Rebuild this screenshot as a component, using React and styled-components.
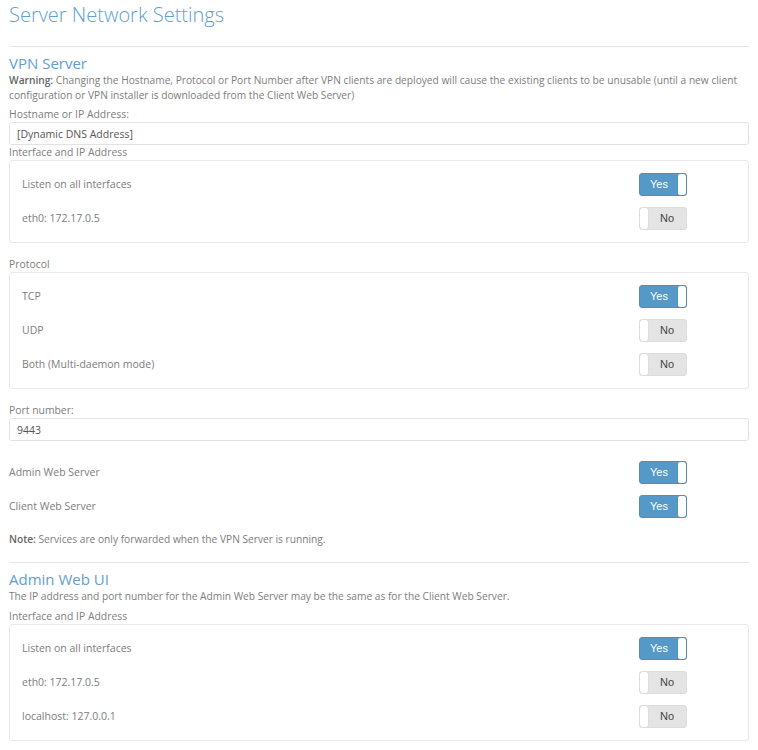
import React, { useState } from "react"
import styled, { createGlobalStyle } from "styled-components"

const GlobalStyle = createGlobalStyle`
  body {
    margin: 0;
    background: #fff;
    font-family: "Open Sans", "Liberation Sans", sans-serif;
    color: #7a7a7a;
  }
`

const Page = styled.div`
  padding: 0 9px;
  width: 740px;
`

const Title = styled.h1`
  margin: 0;
  padding-top: 3px;
  font-size: 20px;
  line-height: 24px;
  font-weight: 300;
  color: #5fa0d2;
`

const Rule = styled.hr`
  border: 0;
  border-top: 1px solid #e6e6e6;
  margin: ${p => p.$top}px 0 0;
`

const Heading = styled.h2`
  margin: 7px 0 0;
  font-size: 15px;
  line-height: 18px;
  font-weight: 400;
  color: #5fa0d2;
`

const Para = styled.p`
  margin: ${p => p.$top || 0}px 0 0;
  font-size: 10.2px;
  line-height: 15px;
  color: #7d7d7d;

  b {
    font-weight: 600;
    color: #666;
  }
`

const Label = styled.div`
  margin-top: ${p => p.$top || 0}px;
  font-size: 10.4px;
  line-height: ${p => p.$h || 15}px;
  color: #7d7d7d;
`

const Input = styled.input`
  display: block;
  box-sizing: border-box;
  width: 100%;
  height: 23px;
  margin: 0;
  padding: 0 7px;
  border: 1px solid #e2e2e2;
  border-radius: 3px;
  font-family: inherit;
  font-size: 10.5px;
  color: #555;
  outline: none;
`

const Panel = styled.div`
  margin-top: ${p => p.$top || 0}px;
  border: 1px solid #e8e8e8;
  border-radius: 3px;
  padding: 6px 0 7px;
`

const Row = styled.div`
  display: flex;
  align-items: center;
  justify-content: space-between;
  height: 34px;
  padding: ${p => (p.$boxed ? "0 61px 0 12px" : "0 62px 0 0")};
  font-size: 10.5px;
  color: #7d7d7d;
`

const Switch = styled.button`
  position: relative;
  box-sizing: border-box;
  width: 48px;
  height: 23px;
  padding: 0;
  border: 1px solid ${p => (p.$on ? "#4a90c4" : "#dcdcdc")};
  border-radius: 3px;
  background: ${p => (p.$on ? "#5499c8" : "#e4e4e4")};
  color: ${p => (p.$on ? "#fff" : "#444")};
  font-family: "Liberation Sans", Arial, sans-serif;
  font-size: 11px;
  cursor: pointer;
  overflow: hidden;

  span {
    display: block;
    padding-${p => (p.$on ? "right" : "left")}: 8px;
    text-align: center;
  }
`

const Knob = styled.i`
  position: absolute;
  top: 0;
  bottom: 0;
  ${p => (p.$on ? "right: 0;" : "left: 0;")}
  width: 8px;
  background: #fff;
  border-radius: 2px;
  box-shadow: 0 0 1px rgba(0, 0, 0, 0.25);
`

const Toggle = ({ initial }) => {
  const [on, setOn] = useState(initial)
  return (
    <Switch $on={on} onClick={() => setOn(!on)}>
      <span>{on ? "Yes" : "No"}</span>
      <Knob $on={on} />
    </Switch>
  )
}

const Option = ({ label, on, boxed = true }) => (
  <Row $boxed={boxed}>
    <span>{label}</span>
    <Toggle initial={on} />
  </Row>
)

export default function App() {
  return (
    <Page>
      <GlobalStyle />
      <Title>Server Network Settings</Title>
      <Rule $top={19} />

      <Heading>VPN Server</Heading>
      <Para $top={1}>
        <b>Warning:</b> Changing the Hostname, Protocol or Port Number after VPN clients are deployed will
        cause the existing clients to be unusable (until a new client configuration or VPN installer is
        downloaded from the Client Web Server)
      </Para>
      <Label $top={4}>Hostname or IP Address:</Label>
      <Input defaultValue="[Dynamic DNS Address]" />
      <Label>Interface and IP Address</Label>
      <Panel>
        <Option label="Listen on all interfaces" on />
        <Option label="eth0: 172.17.0.5" on={false} />
      </Panel>

      <Label $top={14}>Protocol</Label>
      <Panel>
        <Option label="TCP" on />
        <Option label="UDP" on={false} />
        <Option label="Both (Multi-daemon mode)" on={false} />
      </Panel>

      <Label $top={14} $h={15}>Port number:</Label>
      <Input defaultValue="9443" />
      <div style={{ height: 14 }} />
      <Option label="Admin Web Server" on boxed={false} />
      <Option label="Client Web Server" on boxed={false} />
      <Para $top={9}>
        <b>Note:</b> Services are only forwarded when the VPN Server is running.
      </Para>
      <Rule $top={15} />

      <Heading>Admin Web UI</Heading>
      <Para $top={1}>
        The IP address and port number for the Admin Web Server may be the same as for the Client Web Server.
      </Para>
      <Label $top={5}>Interface and IP Address</Label>
      <Panel>
        <Option label="Listen on all interfaces" on />
        <Option label="eth0: 172.17.0.5" on={false} />
        <Option label="localhost: 127.0.0.1" on={false} />
      </Panel>
    </Page>
  )
}
